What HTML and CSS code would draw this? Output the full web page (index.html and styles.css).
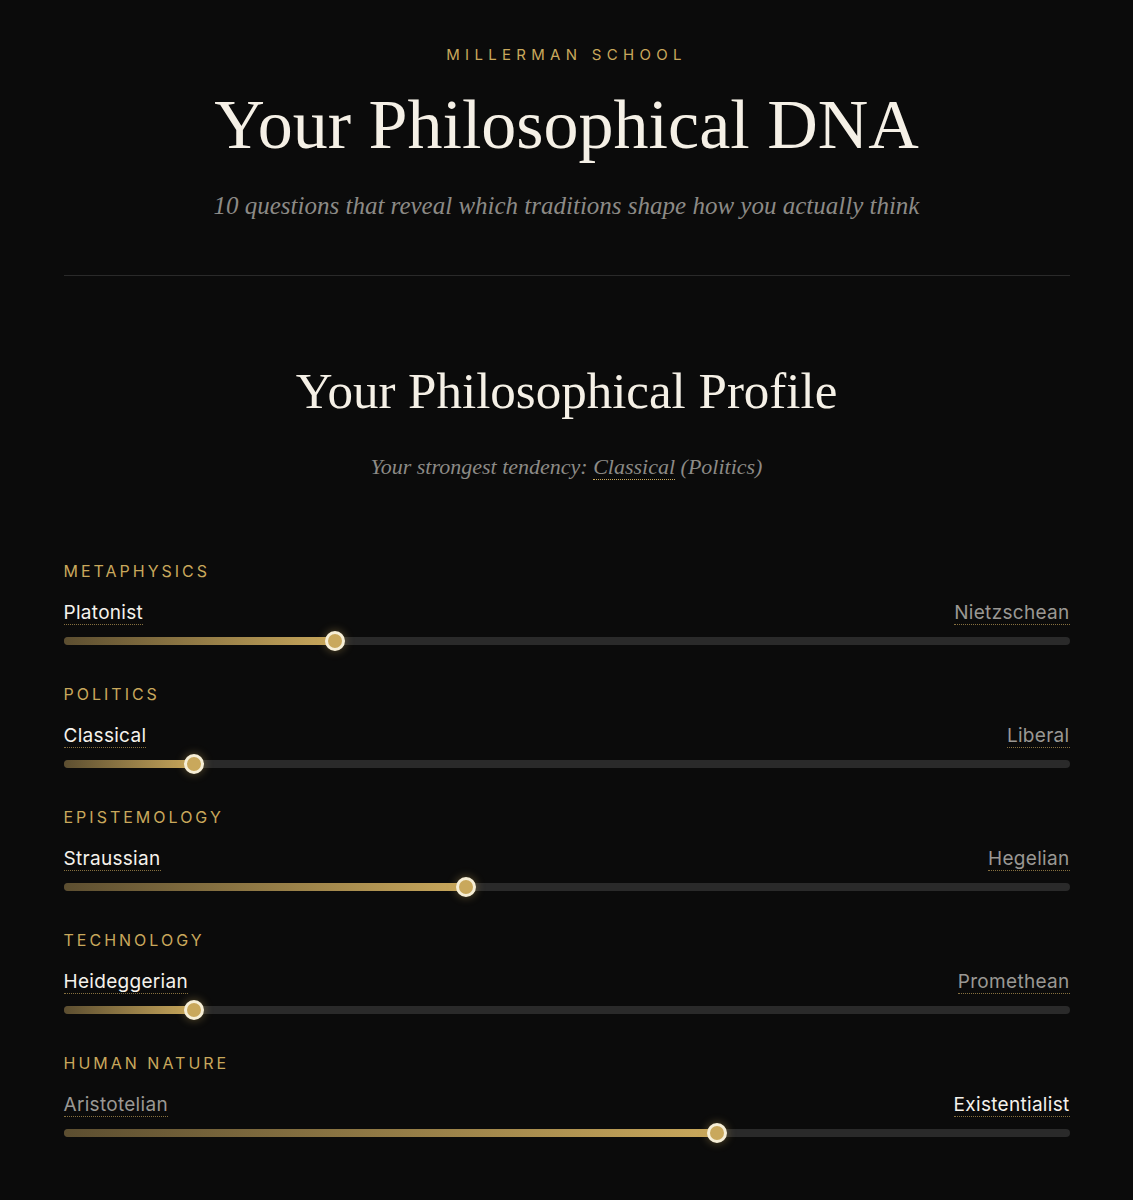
FILE: index.html
```html
<!DOCTYPE html>
<html lang="en">
<head>
    <meta charset="UTF-8">
    <meta name="viewport" content="width=device-width, initial-scale=1.0">
    <title>Your Philosophical DNA</title>
    <link rel="stylesheet" href="styles.css">
</head>
<body>
    <div class="page">
        <header class="intro">
            <div class="eyebrow">Millerman School</div>
            <h1 class="title">Your Philosophical DNA</h1>
            <p class="subtitle">10 questions that reveal which traditions shape how you actually think</p>
        </header>

        <section class="profile">
            <h2 class="profile-title">Your Philosophical Profile</h2>
            <p class="tendency">Your strongest tendency: <span class="term">Classical</span> (Politics)</p>

            <div class="axes">
                <div class="axis">
                    <div class="axis-name">Metaphysics</div>
                    <div class="poles">
                        <span class="pole active">Platonist</span>
                        <span class="pole">Nietzschean</span>
                    </div>
                    <div class="track">
                        <div class="fill" style="width: 27%"><span class="thumb"></span></div>
                    </div>
                </div>

                <div class="axis">
                    <div class="axis-name">Politics</div>
                    <div class="poles">
                        <span class="pole active">Classical</span>
                        <span class="pole">Liberal</span>
                    </div>
                    <div class="track">
                        <div class="fill" style="width: 13%"><span class="thumb"></span></div>
                    </div>
                </div>

                <div class="axis">
                    <div class="axis-name">Epistemology</div>
                    <div class="poles">
                        <span class="pole active">Straussian</span>
                        <span class="pole">Hegelian</span>
                    </div>
                    <div class="track">
                        <div class="fill" style="width: 40%"><span class="thumb"></span></div>
                    </div>
                </div>

                <div class="axis">
                    <div class="axis-name">Technology</div>
                    <div class="poles">
                        <span class="pole active">Heideggerian</span>
                        <span class="pole">Promethean</span>
                    </div>
                    <div class="track">
                        <div class="fill" style="width: 13%"><span class="thumb"></span></div>
                    </div>
                </div>

                <div class="axis">
                    <div class="axis-name">Human Nature</div>
                    <div class="poles">
                        <span class="pole">Aristotelian</span>
                        <span class="pole active">Existentialist</span>
                    </div>
                    <div class="track">
                        <div class="fill" style="width: 65%"><span class="thumb"></span></div>
                    </div>
                </div>
            </div>
        </section>
    </div>
</body>
</html>
```

FILE: styles.css
```css
body {
    margin: 0;
    background-color: #0b0b0b;
    color: #f3eee4;
    font-family: Inter, "Liberation Sans", sans-serif;
}

.page {
    max-width: 1006px;
    margin: 0 auto;
    padding-bottom: 60px;
}

.intro {
    text-align: center;
    padding-top: 45px;
    padding-bottom: 53px;
    border-bottom: 1px solid #2a2a2a;
}

.eyebrow {
    font-size: 15px;
    line-height: 20px;
    letter-spacing: 5.3px;
    text-transform: uppercase;
    color: #c9a85c;
}

.title {
    margin: 21px 0 0;
    font-family: "Liberation Serif", serif;
    font-weight: 400;
    font-size: 70px;
    line-height: 78px;
    color: #f5f0e6;
}

.subtitle {
    margin: 26px 0 0;
    font-family: "Liberation Serif", serif;
    font-style: italic;
    font-size: 25px;
    line-height: 32px;
    color: #8c8a86;
}

.profile {
    padding-top: 85px;
}

.profile-title {
    margin: 0;
    text-align: center;
    font-family: "Liberation Serif", serif;
    font-weight: 400;
    font-size: 51px;
    line-height: 60px;
    color: #f5f0e6;
}

.tendency {
    margin: 31px 0 0;
    text-align: center;
    font-family: "Liberation Serif", serif;
    font-style: italic;
    font-size: 22px;
    line-height: 30px;
    color: #8c8a86;
}

.term {
    border-bottom: 1px dotted #c9a85c;
}

.axes {
    margin-top: 79px;
}

.axis {
    margin-bottom: 39px;
}

.axis-name {
    font-size: 16px;
    line-height: 20px;
    letter-spacing: 3px;
    text-transform: uppercase;
    color: #c9a85c;
}

.poles {
    display: flex;
    justify-content: space-between;
    margin-top: 21px;
}

.pole {
    font-size: 19px;
    line-height: 22px;
    letter-spacing: 0.3px;
    color: #9a9894;
    border-bottom: 1px dotted rgba(201, 168, 92, 0.65);
}

.pole.active {
    color: #f5f2ec;
}

.track {
    position: relative;
    height: 8px;
    margin-top: 12px;
    border-radius: 4px;
    background-color: #2a2a2a;
}

.fill {
    position: relative;
    height: 100%;
    border-radius: 4px;
    background: linear-gradient(to right, #5c4e30, #c9a85c);
}

.thumb {
    position: absolute;
    right: -10px;
    top: 50%;
    width: 14px;
    height: 14px;
    margin-top: -10px;
    border-radius: 50%;
    border: 3px solid #f6eed6;
    background-color: #c9a85c;
    box-shadow: 0 0 10px rgba(201, 168, 92, 0.45);
}
```
